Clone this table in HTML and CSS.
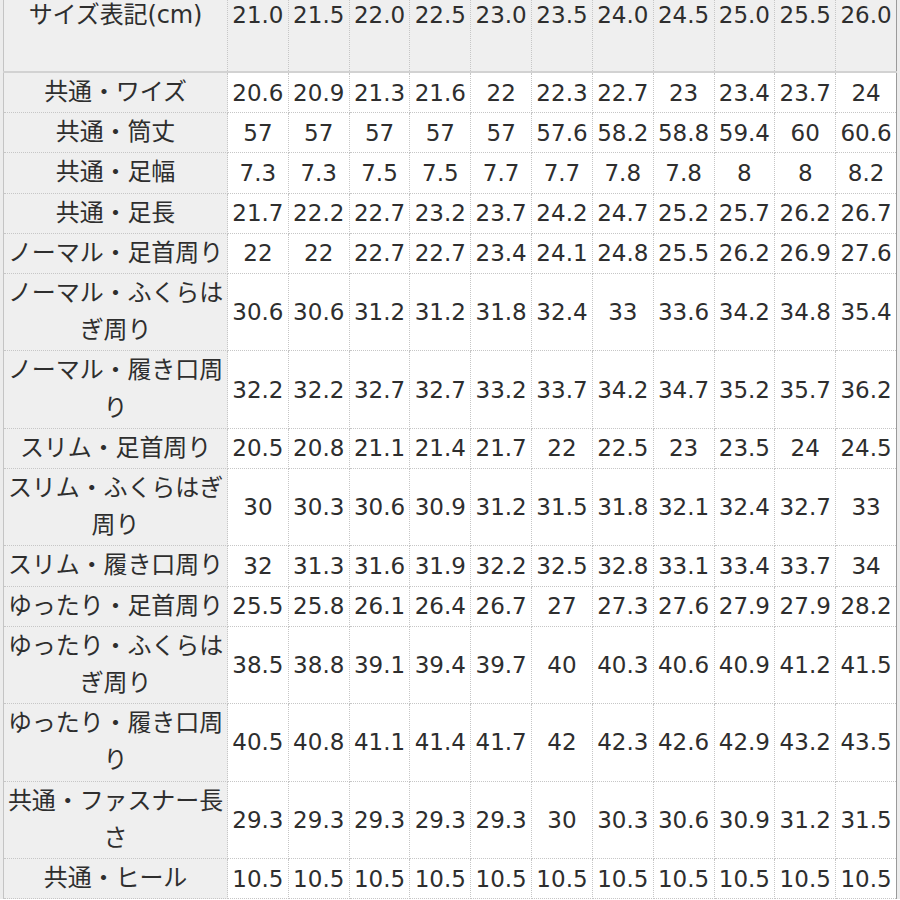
FILE: index.html
```html
<!DOCTYPE html>
<html lang="ja">
<head>
<meta charset="utf-8">
<title>サイズ表</title>
<link rel="stylesheet" href="styles.css">
</head>
<body>
<div class="frame">
<table class="size-table">
<colgroup><col class="c-label"><col span="11"></colgroup>
<thead>
<tr><th class="label">サイズ表記(cm)</th><th>21.0</th><th>21.5</th><th>22.0</th><th>22.5</th><th>23.0</th><th>23.5</th><th>24.0</th><th>24.5</th><th>25.0</th><th>25.5</th><th>26.0</th></tr>
</thead>
<tbody>
<tr><th class="label">共通・ワイズ</th><td>20.6</td><td>20.9</td><td>21.3</td><td>21.6</td><td>22</td><td>22.3</td><td>22.7</td><td>23</td><td>23.4</td><td>23.7</td><td>24</td></tr>
<tr><th class="label">共通・筒丈</th><td>57</td><td>57</td><td>57</td><td>57</td><td>57</td><td>57.6</td><td>58.2</td><td>58.8</td><td>59.4</td><td>60</td><td>60.6</td></tr>
<tr><th class="label">共通・足幅</th><td>7.3</td><td>7.3</td><td>7.5</td><td>7.5</td><td>7.7</td><td>7.7</td><td>7.8</td><td>7.8</td><td>8</td><td>8</td><td>8.2</td></tr>
<tr><th class="label">共通・足長</th><td>21.7</td><td>22.2</td><td>22.7</td><td>23.2</td><td>23.7</td><td>24.2</td><td>24.7</td><td>25.2</td><td>25.7</td><td>26.2</td><td>26.7</td></tr>
<tr><th class="label">ノーマル・足首周り</th><td>22</td><td>22</td><td>22.7</td><td>22.7</td><td>23.4</td><td>24.1</td><td>24.8</td><td>25.5</td><td>26.2</td><td>26.9</td><td>27.6</td></tr>
<tr><th class="label">ノーマル・ふくらはぎ周り</th><td>30.6</td><td>30.6</td><td>31.2</td><td>31.2</td><td>31.8</td><td>32.4</td><td>33</td><td>33.6</td><td>34.2</td><td>34.8</td><td>35.4</td></tr>
<tr><th class="label">ノーマル・履き口周り</th><td>32.2</td><td>32.2</td><td>32.7</td><td>32.7</td><td>33.2</td><td>33.7</td><td>34.2</td><td>34.7</td><td>35.2</td><td>35.7</td><td>36.2</td></tr>
<tr><th class="label">スリム・足首周り</th><td>20.5</td><td>20.8</td><td>21.1</td><td>21.4</td><td>21.7</td><td>22</td><td>22.5</td><td>23</td><td>23.5</td><td>24</td><td>24.5</td></tr>
<tr><th class="label">スリム・ふくらはぎ周り</th><td>30</td><td>30.3</td><td>30.6</td><td>30.9</td><td>31.2</td><td>31.5</td><td>31.8</td><td>32.1</td><td>32.4</td><td>32.7</td><td>33</td></tr>
<tr><th class="label">スリム・履き口周り</th><td>32</td><td>31.3</td><td>31.6</td><td>31.9</td><td>32.2</td><td>32.5</td><td>32.8</td><td>33.1</td><td>33.4</td><td>33.7</td><td>34</td></tr>
<tr><th class="label">ゆったり・足首周り</th><td>25.5</td><td>25.8</td><td>26.1</td><td>26.4</td><td>26.7</td><td>27</td><td>27.3</td><td>27.6</td><td>27.9</td><td>27.9</td><td>28.2</td></tr>
<tr><th class="label">ゆったり・ふくらはぎ周り</th><td>38.5</td><td>38.8</td><td>39.1</td><td>39.4</td><td>39.7</td><td>40</td><td>40.3</td><td>40.6</td><td>40.9</td><td>41.2</td><td>41.5</td></tr>
<tr><th class="label">ゆったり・履き口周り</th><td>40.5</td><td>40.8</td><td>41.1</td><td>41.4</td><td>41.7</td><td>42</td><td>42.3</td><td>42.6</td><td>42.9</td><td>43.2</td><td>43.5</td></tr>
<tr><th class="label">共通・ファスナー長さ</th><td>29.3</td><td>29.3</td><td>29.3</td><td>29.3</td><td>29.3</td><td>30</td><td>30.3</td><td>30.6</td><td>30.9</td><td>31.2</td><td>31.5</td></tr>
<tr><th class="label">共通・ヒール</th><td>10.5</td><td>10.5</td><td>10.5</td><td>10.5</td><td>10.5</td><td>10.5</td><td>10.5</td><td>10.5</td><td>10.5</td><td>10.5</td><td>10.5</td></tr>
</tbody>
</table>
</div>
</body>
</html>
```

FILE: styles.css
```css
html, body {
  margin: 0;
  padding: 0;
  background: #ffffff;
}

.frame {
  width: 897px;
  padding-left: 3px;
  background: #ececec;
}

.size-table {
  table-layout: fixed;
  width: 894px;
  border-collapse: collapse;
  border-left: 1px solid #c4c4c4;
  border-right: 1px solid #9a9a9a;
  color: #2e2e2e;
  font-family: "DejaVu Sans", "Noto Sans CJK JP", sans-serif;
  font-weight: normal;
}

.c-label {
  width: 224px;
}

.size-table th,
.size-table td {
  padding: 1px 2px;
  text-align: center;
  vertical-align: middle;
  font-weight: normal;
  border-right: 1px dotted #c6c6c6;
  border-bottom: 1px dotted #c6c6c6;
  white-space: normal;
}

.size-table td {
  background: #ffffff;
  font-size: 23px;
  line-height: 30px;
  white-space: nowrap;
  padding: 1px 0;
}

.size-table .label {
  background: #efefef;
  font-size: 24px;
  line-height: 37.2px;
  letter-spacing: -0.1px;
}

.size-table thead th {
  background: #efefef;
  height: 71px;
  vertical-align: top;
  padding: 0;
  line-height: 30px;
  font-size: 23px;
  white-space: nowrap;
  border-bottom: 2px solid #d2d2d2;
}

.size-table thead th.label {
  font-size: 24px;
  line-height: 30px;
}
```
